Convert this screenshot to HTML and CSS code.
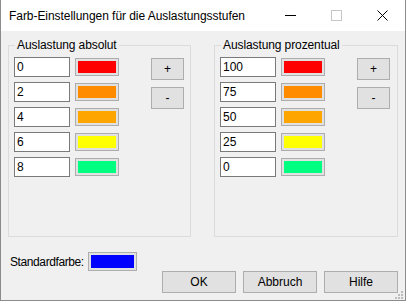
FILE: index.html
```html
<!DOCTYPE html>
<html lang="de">
	<head>
		<meta charset="UTF-8" />
		<title>Farb-Einstellungen</title>
		<link rel="stylesheet" href="styles.css">
	</head>
	<body>
		<div class="window">
			<div class="titlebar">
				<span class="title">Farb-Einstellungen für die Auslastungsstufen</span>
				<div class="controls">
					<span class="ctl"><span class="min"></span></span>
					<span class="ctl"><span class="max"></span></span>
					<span class="ctl">
						<svg width="11" height="11" viewBox="0 0 11 11">
							<path d="M0.5 0.5 L10.5 10.5 M10.5 0.5 L0.5 10.5" stroke="#000" stroke-width="1" fill="none" />
						</svg>
					</span>
				</div>
			</div>

			<div class="content">
				<div class="groups">
					<fieldset class="group">
						<legend>Auslastung absolut</legend>
						<div class="group-body">
							<div class="rows">
								<div class="row"><input type="text" value="0"><button class="swatch"><span class="c-red"></span></button></div>
								<div class="row"><input type="text" value="2"><button class="swatch"><span class="c-orange"></span></button></div>
								<div class="row"><input type="text" value="4"><button class="swatch"><span class="c-amber"></span></button></div>
								<div class="row"><input type="text" value="6"><button class="swatch"><span class="c-yellow"></span></button></div>
								<div class="row"><input type="text" value="8"><button class="swatch"><span class="c-green"></span></button></div>
							</div>
							<div class="pm">
								<button class="btn small">+</button>
								<button class="btn small">-</button>
							</div>
						</div>
					</fieldset>

					<fieldset class="group">
						<legend>Auslastung prozentual</legend>
						<div class="group-body">
							<div class="rows">
								<div class="row"><input type="text" value="100"><button class="swatch"><span class="c-red"></span></button></div>
								<div class="row"><input type="text" value="75"><button class="swatch"><span class="c-orange"></span></button></div>
								<div class="row"><input type="text" value="50"><button class="swatch"><span class="c-amber"></span></button></div>
								<div class="row"><input type="text" value="25"><button class="swatch"><span class="c-yellow"></span></button></div>
								<div class="row"><input type="text" value="0"><button class="swatch"><span class="c-green"></span></button></div>
							</div>
							<div class="pm">
								<button class="btn small">+</button>
								<button class="btn small">-</button>
							</div>
						</div>
					</fieldset>
				</div>

				<div class="default-row">
					<span class="label">Standardfarbe:</span>
					<button class="swatch wide"><span class="c-blue"></span></button>
				</div>

				<div class="actions">
					<button class="btn">OK</button>
					<button class="btn">Abbruch</button>
					<button class="btn">Hilfe</button>
				</div>

				<svg class="grip" width="9" height="9" viewBox="0 0 9 9">
					<rect x="6" y="0" width="2" height="2" fill="#bcbcbc" />
					<rect x="3" y="3" width="2" height="2" fill="#bcbcbc" />
					<rect x="6" y="3" width="2" height="2" fill="#bcbcbc" />
					<rect x="0" y="6" width="2" height="2" fill="#bcbcbc" />
					<rect x="3" y="6" width="2" height="2" fill="#bcbcbc" />
					<rect x="6" y="6" width="2" height="2" fill="#bcbcbc" />
				</svg>
			</div>
		</div>
	</body>
</html>
```

FILE: styles.css
```css
body {
	margin: 0;
	background: #f0f0f0;
	font-family: "Liberation Sans", Arial, sans-serif;
	font-size: 12px;
	color: #000;
}
.window {
	width: 406px;
	height: 301px;
	box-sizing: border-box;
	border: 1px solid #8c8c8c;
	border-top: none;
	display: flex;
	flex-direction: column;
}
.titlebar {
	height: 31px;
	background: white;
	display: flex;
	align-items: center;
	justify-content: space-between;
}
.title {
	padding-left: 8px;
	font-size: 12px;
	letter-spacing: -0.05px;
	margin-top: 1px;
}
.controls {
	display: flex;
	height: 100%;
}
.ctl {
	width: 46px;
	display: flex;
	align-items: center;
	justify-content: center;
}
.min {
	width: 11px;
	height: 1px;
	background: #000;
}
.max {
	width: 9px;
	height: 9px;
	border: 1px solid #c6c6c6;
}
.content {
	flex: 1;
	position: relative;
	background: #f0f0f0;
	padding: 7px 7px 0 7px;
}
.groups {
	display: flex;
	gap: 23px;
}
.group {
	margin: 0;
	width: 183px;
	height: 199px;
	box-sizing: border-box;
	border: 1px solid #dcdcdc;
	padding: 5px 5px 0 5px;
}
.group:last-child {
	width: 184px;
}
legend {
	margin-left: 1px;
	padding: 0 2px;
	line-height: 14px;
	font-size: 12px;
	letter-spacing: -0.1px;
}
.group-body {
	display: flex;
	gap: 32px;
}
.rows {
	display: flex;
	flex-direction: column;
	gap: 5px;
}
.row {
	display: flex;
	align-items: center;
	gap: 5px;
}
input {
	width: 56px;
	height: 20px;
	box-sizing: border-box;
	border: 1px solid #7a7a7a;
	background: white;
	padding: 0 2px;
	margin: 0;
	font-family: inherit;
	font-size: 12px;
	color: #000;
}
.swatch {
	width: 44px;
	height: 18px;
	box-sizing: border-box;
	border: 1px solid #adadad;
	background: #e1e1e1;
	padding: 2px;
	margin: 0;
	display: block;
}
.swatch span {
	display: block;
	width: 100%;
	height: 100%;
}
.swatch.wide {
	width: 49px;
	height: 19px;
}
.c-red { background: #ff0000; }
.c-orange { background: #ff8c00; }
.c-amber { background: #ffa500; }
.c-yellow { background: #ffff00; }
.c-green { background: #00ff80; }
.c-blue { background: #0000ff; }
.pm {
	display: flex;
	flex-direction: column;
	gap: 7px;
	padding-top: 1px;
}
.btn {
	width: 74px;
	height: 22px;
	box-sizing: border-box;
	border: 1px solid #adadad;
	background: #e1e1e1;
	margin: 0;
	padding: 0;
	font-family: inherit;
	font-size: 12px;
	color: #000;
}
.btn.small {
	width: 33px;
}
.default-row {
	display: flex;
	align-items: center;
	margin-top: 15px;
	padding-left: 2px;
}
.label {
	width: 78px;
	letter-spacing: -0.4px;
}
.actions {
	display: flex;
	justify-content: flex-end;
	gap: 7px;
}
.grip {
	position: absolute;
	right: 1px;
	bottom: 0;
}
```
